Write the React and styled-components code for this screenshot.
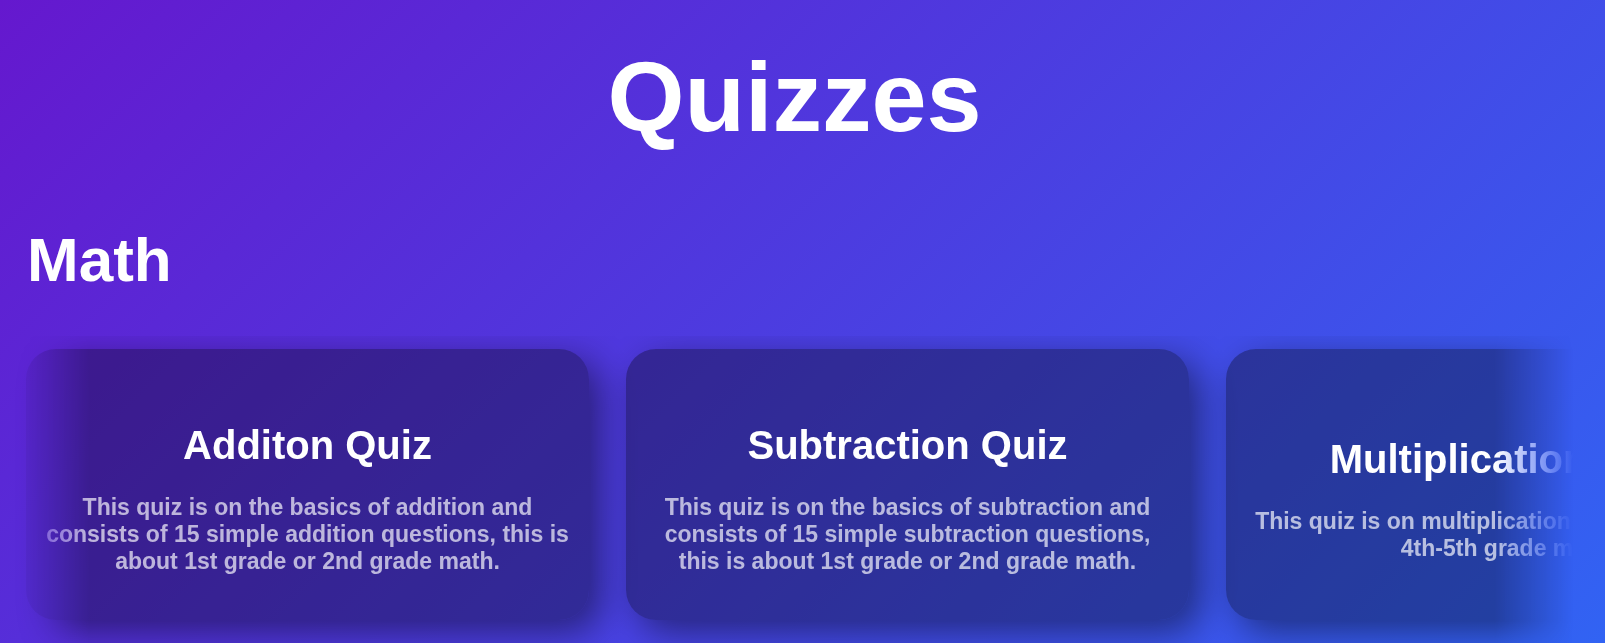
import React from "react";
import styled, { createGlobalStyle } from "styled-components";

const GlobalStyle = createGlobalStyle`
  * { box-sizing: border-box; }
  html { scrollbar-width: none; }
  body {
    margin: 0;
    font-family: "Liberation Sans", Arial, sans-serif;
    color: #fff;
    background: #6518ce linear-gradient(135deg, #6518ce, #2575fc) no-repeat;
    min-height: 1180px;
  }
`;

const Page = styled.main`
  padding: 0 32px 0 11px;
`;

const PageTitle = styled.h1`
  margin: 0;
  padding: 40px 0 0 5px;
  font-size: 99px;
  line-height: 114px;
  text-align: center;
`;

const SectionTitle = styled.h2`
  margin: 70px 0 40px;
  padding-left: 16px;
  font-size: 62px;
  line-height: 72px;
`;

const CardRow = styled.div`
  display: flex;
  gap: 37px;
  padding: 13px 15px 40px;
  overflow-x: auto;
  scrollbar-width: none;
  mask-image: linear-gradient(to right, transparent, #000 5%, #000 95%, transparent);
`;

const Card = styled.a`
  display: flex;
  flex: 0 0 563px;
  min-height: 271px;
  flex-direction: column;
  align-items: center;
  justify-content: center;
  gap: 26px;
  padding: 38px 17px 10px;
  border-radius: 30px;
  background: rgba(0, 0, 0, 0.33);
  box-shadow: 12px 12px 36px rgba(0, 0, 0, 0.45);
  color: inherit;
  text-align: center;
  text-decoration: none;
`;

const CardTitle = styled.h3`
  margin: 0;
  font-size: 40px;
  line-height: 46px;
`;

const CardText = styled.p`
  margin: 0;
  font-size: 23px;
  font-weight: bold;
  line-height: 27px;
  color: rgba(255, 255, 255, 0.67);
`;

const quizzes = [
  {
    title: "Additon Quiz",
    text: "This quiz is on the basics of addition and consists of 15 simple addition questions, this is about 1st grade or 2nd grade math.",
  },
  {
    title: "Subtraction Quiz",
    text: "This quiz is on the basics of subtraction and consists of 15 simple subtraction questions, this is about 1st grade or 2nd grade math.",
  },
  {
    title: "Multiplication Quiz",
    text: "This quiz is on multiplication and this is about 4th-5th grade math.",
  },
];

export default function App() {
  return (
    <>
      <GlobalStyle />
      <Page>
        <PageTitle>Quizzes</PageTitle>
        <section aria-labelledby="math">
          <SectionTitle id="math">Math</SectionTitle>
          <CardRow>
            {quizzes.map((quiz) => (
              <Card key={quiz.title} href="#math">
                <CardTitle>{quiz.title}</CardTitle>
                <CardText>{quiz.text}</CardText>
              </Card>
            ))}
          </CardRow>
        </section>
      </Page>
    </>
  );
}
